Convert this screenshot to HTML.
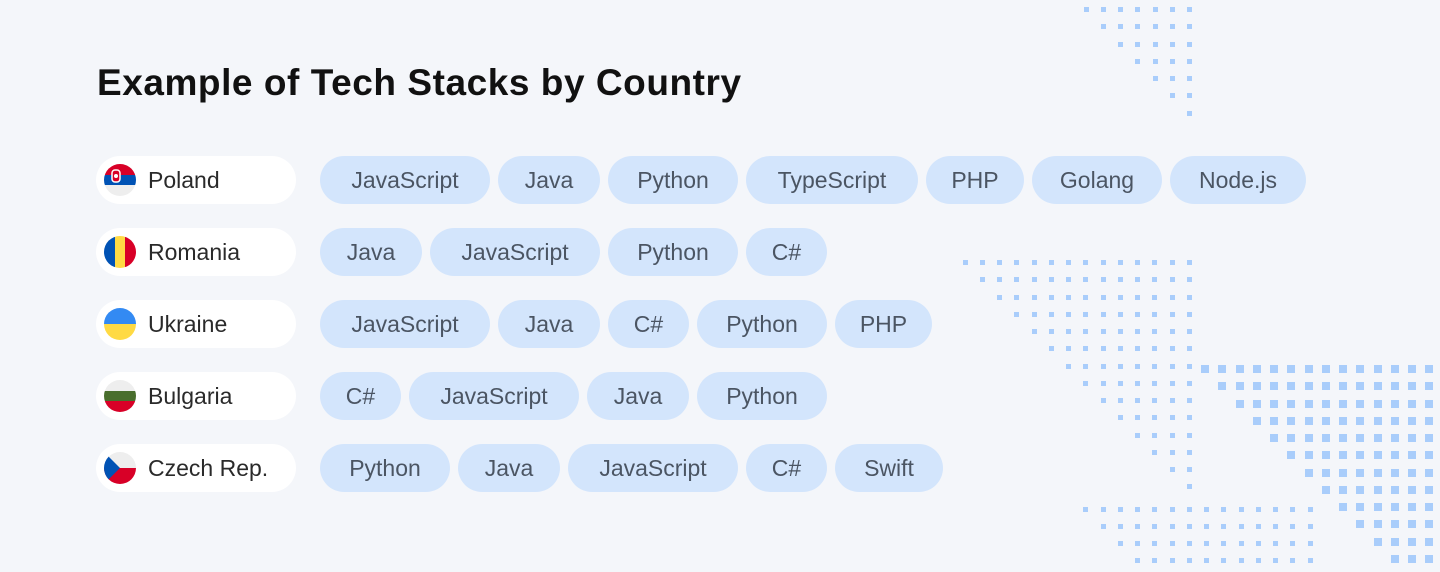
<!DOCTYPE html>
<html><head><meta charset="utf-8"><style>
body{margin:0;width:1440px;height:572px;background:#f4f6fa;position:relative;overflow:hidden;font-family:"Liberation Sans",sans-serif}
h1{position:absolute;left:97px;top:62px;margin:0;font-size:37px;font-weight:bold;color:#111;letter-spacing:0.55px}
.row{position:absolute;left:96px;height:48px;display:flex}
.c{width:200px;height:48px;border-radius:24px;background:#fff;display:flex;align-items:center;font-size:23px;color:#2a2a2a;margin-right:24px}
.c svg{margin:0 12px 0 8px}
.t{height:48px;border-radius:24px;background:#d3e5fc;color:#4b5563;font-size:23px;display:flex;align-items:center;justify-content:center;margin-right:8px}
.d{position:absolute;background:#a9cdfb}
</style></head><body>
<h1>Example of Tech Stacks by Country</h1>

<div class="row" style="top:156px"><div class="c"><svg width="32" height="32" viewBox="0 0 32 32"><clipPath id="a"><circle cx="16" cy="16" r="16"/></clipPath><g clip-path="url(#a)"><rect width="32" height="32" fill="#eee"/><rect width="32" height="11" fill="#d80027"/><rect y="11" width="32" height="10" fill="#0052b4"/><rect x="8" y="6" width="8" height="12" rx="3" fill="#d80027" stroke="#fff" stroke-width="1.5"/><circle cx="12" cy="12" r="2" fill="#fff"/></g></svg>Poland</div>
<div class="t" style="width:170px">JavaScript</div><div class="t" style="width:102px">Java</div><div class="t" style="width:130px">Python</div><div class="t" style="width:172px">TypeScript</div><div class="t" style="width:98px">PHP</div><div class="t" style="width:130px">Golang</div><div class="t" style="width:136px">Node.js</div></div>

<div class="row" style="top:228px"><div class="c"><svg width="32" height="32" viewBox="0 0 32 32"><clipPath id="b"><circle cx="16" cy="16" r="16"/></clipPath><g clip-path="url(#b)"><rect width="11" height="32" fill="#0052b4"/><rect x="11" width="10" height="32" fill="#ffda44"/><rect x="21" width="11" height="32" fill="#d80027"/></g></svg>Romania</div>
<div class="t" style="width:102px">Java</div><div class="t" style="width:170px">JavaScript</div><div class="t" style="width:130px">Python</div><div class="t" style="width:81px">C#</div></div>

<div class="row" style="top:300px"><div class="c"><svg width="32" height="32" viewBox="0 0 32 32"><clipPath id="c"><circle cx="16" cy="16" r="16"/></clipPath><g clip-path="url(#c)"><rect width="32" height="16" fill="#338af3"/><rect y="16" width="32" height="16" fill="#ffda44"/></g></svg>Ukraine</div>
<div class="t" style="width:170px">JavaScript</div><div class="t" style="width:102px">Java</div><div class="t" style="width:81px">C#</div><div class="t" style="width:130px">Python</div><div class="t" style="width:97px">PHP</div></div>

<div class="row" style="top:372px"><div class="c"><svg width="32" height="32" viewBox="0 0 32 32"><clipPath id="e"><circle cx="16" cy="16" r="16"/></clipPath><g clip-path="url(#e)"><rect width="32" height="11" fill="#eee"/><rect y="11" width="32" height="10" fill="#496e2d"/><rect y="21" width="32" height="11" fill="#d80027"/></g></svg>Bulgaria</div>
<div class="t" style="width:81px">C#</div><div class="t" style="width:170px">JavaScript</div><div class="t" style="width:102px">Java</div><div class="t" style="width:130px">Python</div></div>

<div class="row" style="top:444px"><div class="c"><svg width="32" height="32" viewBox="0 0 32 32"><clipPath id="f"><circle cx="16" cy="16" r="16"/></clipPath><g clip-path="url(#f)"><rect width="32" height="16" fill="#eee"/><rect y="16" width="32" height="16" fill="#d80027"/><path d="M0 0L16 16L0 32Z" fill="#0052b4"/></g></svg>Czech Rep.</div>
<div class="t" style="width:130px">Python</div><div class="t" style="width:102px">Java</div><div class="t" style="width:170px">JavaScript</div><div class="t" style="width:81px">C#</div><div class="t" style="width:108px">Swift</div></div>

<script>
function cl(x0,y0,cols,rows,sz,startFn,endFn){
 var s=17.25,h='';
 for(var r=0;r<rows;r++){var a=startFn(r),b=endFn(r);for(var c=a;c<b;c++){
  var x=x0+c*s,y=y0+r*s;h+='<div class="d" style="left:'+(x-sz/2).toFixed(1)+'px;top:'+(y-sz/2).toFixed(1)+'px;width:'+sz+'px;height:'+sz+'px"></div>';}}
 document.body.insertAdjacentHTML('beforeend',h);
}
cl(1086,9.5,7,7,5,function(r){return r},function(){return 7});
cl(965,262.5,14,14,5,function(r){return r},function(){return 14});
cl(1205,369,14,12,8,function(r){return r},function(){return 14});
cl(1085.7,509,14,4,5,function(r){return r},function(){return 14});
</script>
</body></html>
